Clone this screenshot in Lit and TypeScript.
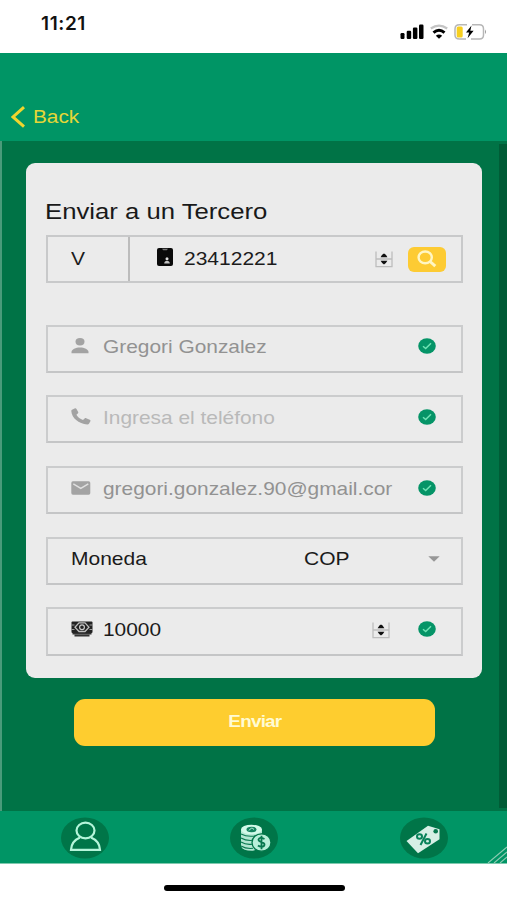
import { LitElement, html, css, svg, nothing } from "lit";
import { customElement, property } from "lit/decorators.js";

const icons: Record<string, unknown> = {
  badge: svg`<svg width="16" height="18" viewBox="0 0 16 18"><rect width="16" height="18" rx="2" fill="#0a0a0a"/><path d="M5 .8h6l-1.200 1.400H6.200z" fill="#777"/><circle cx="10" cy="10.700" r="1.500" fill="#ddd"/><path d="M7.200 15.500c0-2 1.300-2.800 2.800-2.800s2.800.8 2.800 2.800z" fill="#c4c4c4"/></svg>`,
  person: svg`<svg width="18" height="16" viewBox="0 0 18 16" fill="#a3a3a3"><ellipse cx="9" cy="3.800" rx="4.500" ry="3.700"/><path d="M.5 15.300v-1.200c0-2.800 4.200-4.600 8.500-4.600s8.500 1.800 8.500 4.600v1.200z"/></svg>`,
  phone: svg`<svg width="20" height="17" viewBox="0 0 20 17"><path d="M1 1.800 3.600.4c.8-.4 1.500-.2 1.900.5l1.700 3.200c.3.600.1 1.100-.4 1.500L5.400 6.700c1.500 2.500 3.700 4.200 6.600 5.200l1.600-1.500c.5-.4 1-.5 1.600-.2l3.500 1.500c.8.400 1 .9.700 1.600l-1.300 2.300c-.4.600-.9.800-1.700.8C7.500 15.800.7 10 .3 3c0-.6.200-1 .7-1.200z" fill="#a3a3a3"/></svg>`,
  mail: svg`<svg width="20" height="14" viewBox="0 0 20 14"><rect x=".3" y=".3" width="19" height="13.400" rx="1.600" fill="#a3a3a3"/><path d="m2.300 2.800 7.500 4.600 7.500-4.600" fill="none" stroke="#e0e0e0" stroke-width="1.500"/></svg>`,
  money: svg`<svg width="22" height="16" viewBox="0 0 22 16"><rect x=".5" y=".5" width="21" height="11.500" rx="1" fill="#222"/><path d="M1.500 12.700h19M3.500 14.700h15" stroke="#333" stroke-width="1.700"/><path d="m4 6.200 4-4.300h6l4 4.300-4 4.300H8z" fill="#222" stroke="#bdbdbd" stroke-width="1.300"/><circle cx="11" cy="6.200" r="2.400" fill="#222" stroke="#ccc" stroke-width="1.200"/><path d="M.5 4h3M.5 8.500h3M18.500 4h3M18.500 8.500h3" stroke="#aaa" stroke-width=".9"/></svg>`,
  search: svg`<svg width="20" height="18" viewBox="0 0 20 18" fill="none" stroke="#fff6c4"><ellipse cx="8.200" cy="7.400" rx="6.600" ry="5.900" stroke-width="2.400"/><path d="m13 11.500 5.300 4.700" stroke-width="3"/></svg>`,
  steps: svg`<svg width="18" height="18" viewBox="0 0 18 18"><path d="M1 1.500v15.200h16V1.500M1 9h16" fill="none" stroke="#bdbdbd" stroke-width="1.300"/><path d="M5.600 7.200Q7.500 3.600 9 3.400q1.500.2 3.400 3.800zM5.600 10.800h6.800q-1.900 3.500-3.400 3.700-1.500-.2-3.400-3.700z" fill="#111"/></svg>`,
  check: svg`<svg width="18" height="16" viewBox="0 0 18 16"><ellipse cx="9" cy="8" rx="8.800" ry="7.700" fill="#059467"/><path d="m5 8.300 2.700 2.300L13 5.300" fill="none" stroke="#6fe3b4" stroke-width="1.500"/></svg>`,
  caret: svg`<svg width="12" height="6" viewBox="0 0 12 6"><path d="M.3.300h11.400L6 5.800z" fill="#979797"/></svg>`,
};

@customElement("form-field")
class FormField extends LitElement {
  @property() icon = "";
  @property() value = "";
  @property() tone = "dark";
  @property() trailing = "check";
  @property({ type: Boolean }) stepper = false;

  static styles = css`
    :host { display: block; height: 48.200px; margin-bottom: 22.530px; }
    .box {
      box-sizing: border-box; height: 100%; border: 2px solid #cbcccd; border-bottom-color: #c4c5c6;
      display: grid; grid-template-columns: 31.500px 245.500px 32px 1fr; align-items: center; padding: 0 0 5px 23px;
    }
    svg { display: block; }
    .icon { justify-self: start; }
    .text { font-size: 18.200px; line-height: 24px; white-space: nowrap; transform: scaleX(1.148); transform-origin: left; padding-top: 2px; }
    .dark { color: #1b1b1b; }
    .muted { color: #929292; }
    .hint { color: #b9b9b9; }
    .mark { justify-self: end; margin-right: 25px; }
    .step { padding-left: 24px; padding-top: 3px; }
  `;

  render() {
    return html`<div class="box">
      <span class="icon">${icons[this.icon]}</span>
      <span class="text ${this.tone}">${this.value}</span>
      <span class="step">${this.stepper ? icons.steps : nothing}</span>
      <span class="mark">${icons[this.trailing]}</span>
    </div>`;
  }
}

@customElement("app-root")
class AppRoot extends LitElement {
  static styles = css`
    :host {
      display: flex; flex-direction: column; width: 507px; height: 900px; overflow: hidden;
      background: #fff; position: relative; font-family: "Liberation Sans", Arial, sans-serif;
    }
    svg { display: block; }
    .wide { display: inline-block; transform: scaleX(1.155); transform-origin: left; white-space: nowrap; }
    .status { height: 53px; flex: none; display: flex; justify-content: space-between; }
    .clock { font: 600 19px/24px Inter, sans-serif; letter-spacing: .6px; color: #111; margin: 11.500px 0 0 41px; }
    .signals { display: flex; gap: 6px; margin: 24px 20px 0 0; height: 16px; }
    .header { height: 88px; flex: none; background: #009565; display: flex; align-items: flex-end; }
    .back { display: flex; align-items: center; gap: 8px; padding: 0 0 13px 11px; color: #e5d737; font-size: 18px; line-height: 22px; }
    .main { height: 670px; flex: none; box-sizing: border-box; background: #007346; border-left: 2px solid #4a9b7a; padding: 22px 25px 0 24px; position: relative; }
    .edge { position: absolute; right: 0; top: 3px; bottom: 3px; width: 8px; background: #005c36; }
    .card { box-sizing: border-box; height: 515px; border-radius: 9px; background: #ebebeb; padding: 35px 19px 0 20px; }
    h1 { font-size: 22px; font-weight: 400; line-height: 28px; margin: 0 0 9px; color: #191919; }
    h1 .wide { transform: scaleX(1.168); margin-left: -1px; }
    .identity { height: 48px; box-sizing: border-box; border: 2px solid #c8c9ca; display: flex; align-items: center; margin-bottom: 41.500px; }
    .kind { width: 82px; height: 100%; box-sizing: border-box; border-right: 2px solid #bcbcbc; padding: 10px 0 0 23px; }
    .value { font-size: 18.200px; line-height: 24px; color: #1b1b1b; }
    .id { padding: 0 0 5px 27px; }
    .number { width: 202px; box-sizing: border-box; padding: 0 0 1px 11px; }
    .search { width: 38px; height: 25px; box-sizing: border-box; border-radius: 6px; background: #fdcb33; display: flex; padding: 3px 0 0 9px; margin: 0 0 0 15px; }
    .currency { box-sizing: border-box; height: 48.200px; border: 2px solid #cbcccd; border-bottom-color: #c4c5c6; margin-bottom: 22.530px; display: grid; grid-template-columns: 233px 1fr 33px; align-items: center; padding: 0 0 3px 23px; }
    .send { display: flex; width: 361px; height: 47px; margin: 21px 0 0 48px; border-radius: 11px; background: #fecd2f; color: #fffbd4; justify-content: center; padding-bottom: 2px; box-sizing: border-box; align-items: center; font-size: 17px; font-weight: 700; letter-spacing: -.7px; }
    .send span { transform: scaleX(1.11); }
    .nav { position: relative; height: 53px; flex: none; box-sizing: border-box; background: #009565; display: grid; grid-template-columns: repeat(3, 169.300px); justify-items: center; padding: 6px 0 0 .5px; border-bottom: 1px solid #7fc9ae; }
    .grip { position: absolute; right: 0; bottom: 0; }
    .home { width: 181px; height: 6px; border-radius: 3px; background: #000; margin: 21px 0 0 164px; }
  `;

  render() {
    return html`
      <div class="status">
        <span class="clock">11:21</span>
        <div class="signals">
          <svg width="24" height="16" viewBox="0 0 24 16"><rect x=".5" y="9" width="4" height="6" rx="1.200"/><rect x="6.700" y="6.800" width="4.500" height="8.200" rx="1.200"/><rect x="12.900" y="3.500" width="4.500" height="11.500" rx="1.200"/><rect x="19" y=".5" width="4.500" height="14.500" rx="1.200"/></svg>
          <svg width="18" height="16" viewBox="0 0 18 16" fill="none"><path d="M.8 4.500Q9-1.300 17.200 4.500" stroke="#c4c4c4" stroke-width="2.200"/><path d="M3.500 8.600Q9 4 14.500 8.600" stroke="#000" stroke-width="3"/><path d="M5.800 11.700Q9 9.500 12.200 11.700L9 14.800z" fill="#000"/></svg>
          <svg width="33" height="16" viewBox="0 0 33 16" fill="none"><path d="M13 .8H5.500Q1 .8 1 5v6q0 4 4.500 4H12M18 .8h7.500Q29.500.8 29.500 5v6q0 4-4 4H17" stroke="#b7b7b7" stroke-width="1.500"/><rect x="2.700" y="2.500" width="6" height="11" rx="1.500" fill="#f7cf1f"/><path d="m17.500 1.500-5.500 7h3.200l-1.600 5.800 6-7.600h-3.300z" fill="#000"/><path d="M31 5.500q2 2.300 0 4.600z" fill="#999"/></svg>
        </div>
      </div>
      <div class="header">
        <div class="back">
          <svg width="14" height="22" viewBox="0 0 14 22"><path d="M13 1.200 2 11l11 9.600" fill="none" stroke="#f0d52e" stroke-width="3"/></svg>
          <span class="wide">Back</span>
        </div>
      </div>
      <div class="main">
        <div class="edge"></div>
        <div class="card">
          <h1><span class="wide">Enviar a un Tercero</span></h1>
          <div class="identity">
            <div class="kind"><span class="wide value">V</span></div>
            <span class="id">${icons.badge}</span>
            <span class="number"><span class="wide value">23412221</span></span>
            <span>${icons.steps}</span>
            <span class="search">${icons.search}</span>
          </div>
          <form-field icon="person" value="Gregori Gonzalez" tone="muted"></form-field>
          <form-field icon="phone" value="Ingresa el teléfono" tone="hint"></form-field>
          <form-field icon="mail" value="gregori.gonzalez.90@gmail.cor" tone="muted"></form-field>
          <div class="currency">
            <span class="wide value">Moneda</span>
            <span class="wide value">COP</span>
            <span>${icons.caret}</span>
          </div>
          <form-field icon="money" value="10000" stepper></form-field>
        </div>
        <div class="send"><span>Enviar</span></div>
      </div>
      <div class="nav">
        <svg width="48" height="42" viewBox="0 0 48 42"><ellipse cx="24" cy="21" rx="24" ry="20.500" fill="#007548"/><g fill="none" stroke="#b5f5da" stroke-width="2.200"><ellipse cx="24.500" cy="13.500" rx="9" ry="7.800"/><path d="M19 20.500q-8.500 3.500-9 12.300h29q-.5-8.800-9-12.300"/></g></svg>
        <svg width="48" height="42" viewBox="0 0 48 42"><ellipse cx="24" cy="21" rx="24" ry="20.500" fill="#007548"/><path d="M11 12.500v17q2 4.500 12 4.200l9-3V12.500z" fill="#b2e7d2"/><ellipse cx="21.500" cy="12.500" rx="10.500" ry="4.800" fill="#d2fae9"/><ellipse cx="21.500" cy="12.500" rx="5" ry="2.800" fill="#168460"/><path d="M19 13.500q2.500-4 5-1" stroke="#b9efda" fill="none"/><path d="M11 17q9 4.500 21 0M11 21q6 3.500 14 2M11 25q5 3 11 2.200M11 29q5 3 12 2.300" fill="none" stroke="#08784f" stroke-width="1.100"/><ellipse cx="31.500" cy="25.500" rx="9.500" ry="8.700" fill="#b8efd9" stroke="#007548" stroke-width="1.300"/><path d="M34.500 22q-5-2.500-6 .6c-.2 3 6.500 2 6 5.200-.7 3.200-5 2-6.500.7M31.500 18.700v13.600" fill="none" stroke="#08784f" stroke-width="1.800"/></svg>
        <svg width="48" height="42" viewBox="0 0 48 42"><ellipse cx="24" cy="21" rx="24" ry="20.500" fill="#007548"/><path d="M6.500 24 28 8.800l11.500 3.400v10L18 36.200z" fill="#d6efe5"/><circle cx="35.700" cy="14.300" r="2.300" fill="#08784f"/><g fill="none" stroke="#08825a" stroke-width="2"><ellipse cx="19.500" cy="19.500" rx="2.500" ry="2.200"/><ellipse cx="27.500" cy="24.300" rx="2.500" ry="2.200"/><path d="m26.500 16.500-6 11.500"/></g></svg>
        <svg class="grip" width="20" height="17" viewBox="0 0 20 17"><path d="M1 17 20 1M7 17 20 6M13 17l7-6" stroke="#8bcbb2" stroke-width="1.100"/></svg>
      </div>
      <div class="home"></div>
    `;
  }
}
